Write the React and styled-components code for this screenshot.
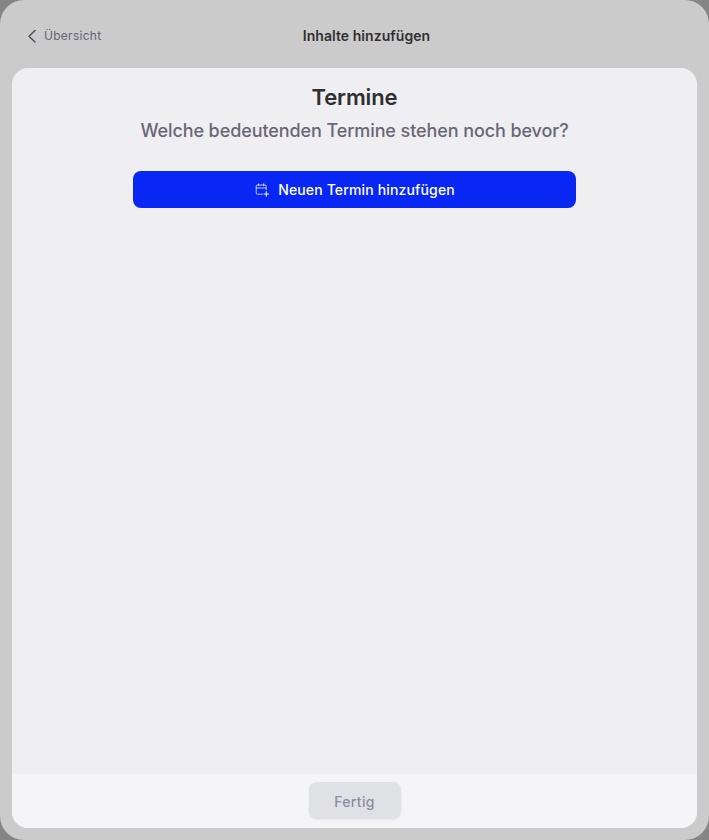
import React from "react";
import styled, { createGlobalStyle } from "styled-components";

const GlobalStyle = createGlobalStyle`
  * { box-sizing: border-box; }
  body { margin: 0; background: #858585; }
  button, h1, h2, p { margin: 0; font-family: Inter, sans-serif; }
`;

const Dialog = styled.main`
  display: flex;
  flex-direction: column;
  width: 709px;
  height: 840px;
  padding: 0 12px 12px;
  border-radius: 24px;
  background: #cbcbcb;
  font-family: Inter, sans-serif;
`;

const Header = styled.header`
  display: grid;
  grid-template-columns: 1fr auto 1fr;
  align-items: center;
  height: 68px;
  flex: none;
  padding: 4px 0 0 14px;
`;

const BackButton = styled.button`
  display: flex;
  align-items: center;
  justify-self: start;
  gap: 6px;
  padding: 0;
  border: 0;
  background: none;
  color: #666576;
  font-size: 12px;
  line-height: 16px;
  letter-spacing: 0.28px;
`;

const DialogTitle = styled.h1`
  color: #303032;
  font-size: 14px;
  line-height: 20px;
  font-weight: 600;
  letter-spacing: 0.05px;
  padding-left: 10px;
`;

const Panel = styled.section`
  display: flex;
  flex: 1;
  flex-direction: column;
  overflow: hidden;
  border-radius: 16px;
  background: #efeff1;
`;

const Content = styled.div`
  display: flex;
  flex: 1;
  flex-direction: column;
  align-items: center;
  padding-top: 13px;
`;

const Heading = styled.h2`
  color: #2f2f31;
  font-size: 22px;
  line-height: 32px;
  font-weight: 600;
  letter-spacing: -0.12px;
`;

const Question = styled.p`
  margin-top: 6px;
  color: #686778;
  font-size: 18px;
  line-height: 24px;
  font-weight: 500;
  letter-spacing: -0.09px;
`;

const AddButton = styled.button`
  display: flex;
  align-items: center;
  justify-content: center;
  gap: 8px;
  width: 443px;
  height: 37px;
  margin-top: 28px;
  padding: 0;
  border: 0;
  border-radius: 8px;
  background: #0827f5;
  color: #fff;
  font-size: 14px;
  line-height: 20px;
  font-weight: 500;
  letter-spacing: 0.15px;
`;

const Footer = styled.footer`
  display: flex;
  align-items: center;
  justify-content: center;
  flex: none;
  height: 54px;
  padding-bottom: 1px;
  background: #f5f5f7;
`;

const DoneButton = styled.button`
  width: 92px;
  height: 37px;
  padding: 2px 0 0;
  border: 0;
  border-radius: 8px;
  background: #dfe1e5;
  box-shadow: 0 1px 3px rgba(30, 30, 50, 0.06);
  color: #8d8ca3;
  font-size: 14px;
  line-height: 20px;
  font-weight: 500;
  letter-spacing: 0.3px;
`;

const Icon = styled.svg`
  display: block;
  flex: none;
  fill: none;
  stroke: currentColor;
  stroke-linecap: round;
  stroke-linejoin: round;
`;

const BackIcon = () => (
  <Icon width="12" height="16" viewBox="0 0 12 16" strokeWidth="1.25" color="#454452">
    <path d="M9 2.5 3 8.3 9 14" />
  </Icon>
);

const CalendarPlusIcon = () => (
  <Icon width="16" height="16" viewBox="0 0 16 16" strokeWidth="0.9">
    <path opacity="0.82" d="M8.3 12.2H3.4c-.8 0-1.2-.4-1.2-1.2V4.2C2.2 3.4 2.6 3 3.4 3H11c.8 0 1.2.4 1.2 1.2v3.5M2.2 6h10M4.7 1.8v2M9.7 1.8v2" />
    <path strokeWidth="1" d="M12.3 9.7v4.6M10 12h4.6" />
  </Icon>
);

export default function App() {
  return (
    <>
      <GlobalStyle />
      <Dialog>
        <Header>
          <BackButton><BackIcon />Übersicht</BackButton>
          <DialogTitle>Inhalte hinzufügen</DialogTitle>
        </Header>
        <Panel>
          <Content>
            <Heading>Termine</Heading>
            <Question>Welche bedeutenden Termine stehen noch bevor?</Question>
            <AddButton><CalendarPlusIcon />Neuen Termin hinzufügen</AddButton>
          </Content>
          <Footer><DoneButton disabled>Fertig</DoneButton></Footer>
        </Panel>
      </Dialog>
    </>
  );
}
